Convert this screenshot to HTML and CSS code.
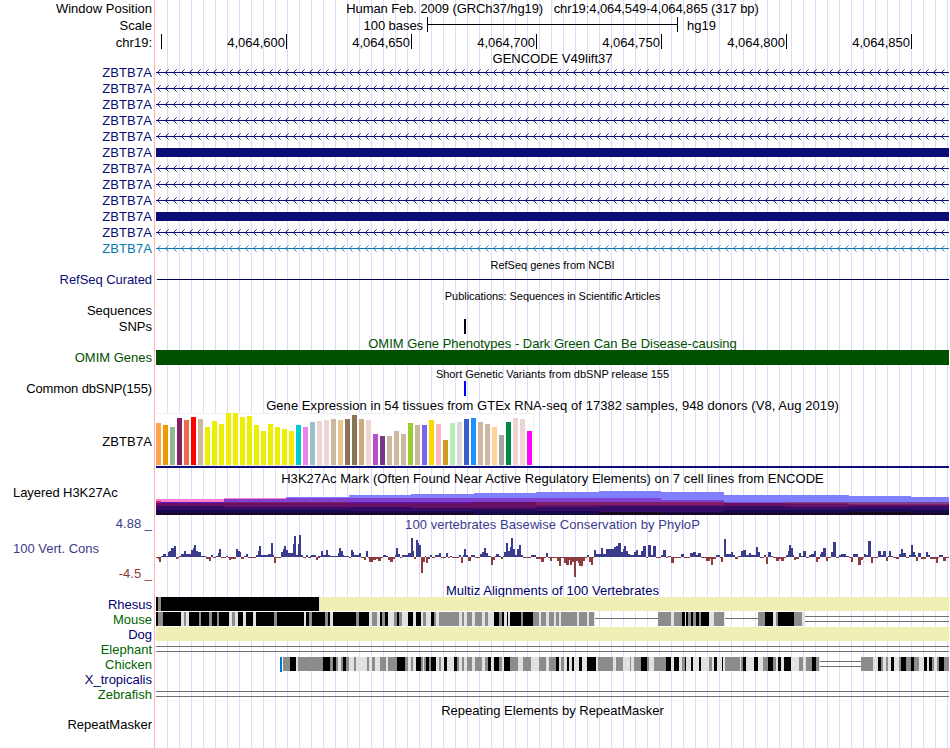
FILE: index.html
```
<!DOCTYPE html>
<html lang="en">
<head>
<meta charset="UTF-8">
<title>Human chr19:4,064,549-4,064,865 Genome Browser hg19</title>
<link rel="stylesheet" href="styles.css">
</head>
<body>
<div class="browser">
    <div class="row h17"><div class="label">Window Position</div><div class="track center"><span class="position">Human Feb. 2009 (GRCh37/hg19) &nbsp; chr19:4,064,549-4,064,865 (317 bp)</span></div></div>
    <div class="row h17"><div class="label">Scale</div><div class="track scale"><span class="bases">100 bases</span><div class="ruler"></div><span>hg19</span></div></div>
    <div class="row h16"><div class="label">chr19:</div><div class="track axis"><span></span><span>4,064,600</span><span>4,064,650</span><span>4,064,700</span><span>4,064,750</span><span>4,064,800</span><span>4,064,850</span></div></div>

    <div class="title h14 down"><span>GENCODE V49lift37</span></div>
    <div id="genes"></div>

    <div class="title small h17"><span>RefSeq genes from NCBI</span></div>
    <div class="row h14 refseq"><div class="label">RefSeq Curated</div><div class="track"><div class="line"></div></div></div>

    <div class="title small h16 pubs"><span>Publications: Sequences in Scientific Articles</span></div>
    <div class="row h16"><div class="label up">Sequences</div><div class="track"></div></div>
    <div class="row h15"><div class="label">SNPs</div><div class="track"><div class="snp"></div></div></div>

    <div class="title omim h16 down"><span>OMIM Gene Phenotypes - Dark Green Can Be Disease-causing</span></div>
    <div class="row h15 omim"><div class="label">OMIM Genes</div><div class="track fill"></div></div>

    <div class="title small h16 down"><span>Short Genetic Variants from dbSNP release 155</span></div>
    <div class="row h15"><div class="label dbsnp">Common dbSNP(155)</div><div class="track"><div class="snp blue"></div></div></div>

    <div class="title h17 down wide"><span>Gene Expression in 54 tissues from GTEx RNA-seq of 17382 samples, 948 donors (V8, Aug 2019)</span></div>
    <div class="row gtex"><div class="label down">ZBTB7A</div><div class="track"><svg id="gtex" width="378" height="53"></svg></div></div>

    <div class="title h3k wide"><span>H3K27Ac Mark (Often Found Near Active Regulatory Elements) on 7 cell lines from ENCODE</span></div>
    <div class="row layered"><div class="label left">Layered H3K27Ac</div><div class="track"><svg id="h3k27ac" width="793" height="26"></svg></div></div>

    <div class="row phylop">
        <div class="label cons"><span class="max">4.88 _</span><span class="name">100 Vert. Cons</span><span class="min">-4.5 _</span></div>
        <div class="track"><div class="title phylo wide"><span>100 vertebrates Basewise Conservation by PhyloP</span></div><svg id="wiggle" width="793" height="48"></svg></div>
    </div>

    <div class="title multiz wide"><span>Multiz Alignments of 100 Vertebrates</span></div>
    <div id="species"></div>

    <div class="title h16"><span>Repeating Elements by RepeatMasker</span></div>
    <div class="row h15"><div class="label up">RepeatMasker</div><div class="track"></div></div>
</div>
<script src="script.js"></script>
</body>
</html>
```

FILE: styles.css
```
body {
    margin: 0;
    background: white;
    color: black;
    font-family: "Liberation Sans", Arial, sans-serif;
    font-size: 13px;
}

/* base guidelines every 12px, red line between labels and tracks */
.browser {
    width: 949px;
    height: 748px;
    overflow: hidden;
    background:
        linear-gradient(#ffb4b4, #ffb4b4) 154px 0 / 1px 100% no-repeat,
        repeating-linear-gradient(to right, #dcdcfa 0, #dcdcfa 1px, transparent 1px, transparent 12px) 167px 0 / 782px 100% no-repeat;
}

.row {
    display: flex;
}

.label {
    box-sizing: border-box;
    width: 156px;
    flex: none;
    padding-right: 4px;
    display: flex;
    align-items: center;
    justify-content: flex-end;
    white-space: pre;
}

.label.left {
    justify-content: flex-start;
    padding-left: 13px;
    letter-spacing: -0.06px;
}

.label.dbsnp {
    letter-spacing: -0.12px;
}

.track {
    width: 793px;
    flex: none;
}

.center {
    display: flex;
    align-items: center;
    justify-content: center;
}

.position {
    letter-spacing: -0.09px;
}

.title {
    box-sizing: border-box;
    margin-left: 156px;
    width: 793px;
    display: flex;
    align-items: center;
    justify-content: center;
    white-space: pre;
}

.wide {
    letter-spacing: 0.06px;
}

.small {
    font-size: 11px;
}

.down {
    box-sizing: border-box;
    padding-top: 2px;
}

.up {
    padding-bottom: 2px;
}

svg {
    display: block;
    shape-rendering: crispEdges;
}

.h14 { height: 14px; }
.h15 { height: 15px; }
.h16 { height: 16px; }
.h17 { height: 17px; }

.scale {
    display: flex;
    align-items: center;
}

.bases {
    width: 267px;
    text-align: right;
    margin-right: 4px;
    letter-spacing: -0.06px;
}

.ruler {
    width: 249px;
    height: 15px;
    align-self: flex-start;
    margin-right: 9px;
    border: solid black;
    border-width: 0 1px;
    background: linear-gradient(black, black) 0 7px / 100% 1px no-repeat;
}

.axis {
    display: flex;
    overflow: hidden;
}

.axis span {
    box-sizing: border-box;
    flex: none;
    width: 125px;
    height: 15px;
    line-height: 17px;
    padding-right: 1px;
    border-right: 1px solid black;
    text-align: right;
}

.axis span:first-child {
    width: 6px;
}

.gene {
    height: 16px;
    color: #0c0c78;
}

.gene .label {
    letter-spacing: 0.1px;
}

.gene.alt {
    color: #0c78b4;
}

.gene .bar {
    height: 9px;
    margin-top: 4px;
    background: #0c0c78;
}

.refseq {
    color: #0c0c78;
}

.refseq .label {
    height: 13px;
    letter-spacing: -0.06px;
}

.refseq .line {
    height: 1px;
    margin: 6px 0 0 1px;
    background: #000050;
}

.pubs {
    padding-top: 2px;
    letter-spacing: -0.05px;
}

.snp {
    width: 2px;
    height: 15px;
    margin-left: 308px;
    background: black;
}

.snp.blue {
    background: #0000ff;
}

.omim {
    color: #005000;
}

.omim .fill {
    background: #005000;
}

.gtex {
    height: 55px;
}

.gtex .label {
    letter-spacing: 0.1px;
}

.gtex .track {
    border-bottom: 2px solid #0c0c78;
    height: 53px;
}

.h3k {
    height: 21px;
}

.layered {
    height: 26px;
}

.layered .label {
    height: 7px;
}

.phylop {
    height: 68px;
}

.cons {
    flex-direction: column;
    align-items: flex-end;
    justify-content: flex-start;
    color: #3c3c8c;
    line-height: 16px;
}

.cons .max {
    padding-top: 1px;
}

.cons .name {
    align-self: flex-start;
    margin: 9px 0 9px 13px;
}

.cons .min {
    color: #8c3c3c;
}

.phylo {
    margin-left: 0;
    height: 20px;
    padding-bottom: 2px;
    color: #3c3c8c;
}

.multiz {
    height: 14px;
    color: #000064;
}

.species {
    height: 15px;
    color: #00006e;
}

.species.green {
    color: #006400;
}
```

FILE: script.js
```
const NS = "http://www.w3.org/2000/svg";

function rect(svg, x, y, w, h, fill) {
    let r = document.createElementNS(NS, "rect");
    r.setAttribute("x", x);
    r.setAttribute("y", y);
    r.setAttribute("width", w);
    r.setAttribute("height", h);
    r.setAttribute("fill", fill);
    svg.appendChild(r);
}

function makeSvg(w, h) {
    let svg = document.createElementNS(NS, "svg");
    svg.setAttribute("width", w);
    svg.setAttribute("height", h);
    return svg;
}

function addRow(parent, className, name) {
    let row = document.createElement("div");
    row.className = "row " + className;
    row.innerHTML = '<div class="label">' + name + '</div><div class="track"></div>';
    document.getElementById(parent).appendChild(row);
    return row.lastChild;
}

// genes: introns point left, two transcripts are exonic over the whole window
for (let i = 0; i < 12; i++) {
    let track = addRow("genes", i == 11 ? "gene alt" : "gene", "ZBTB7A");
    if (i == 5 || i == 9) {
        track.innerHTML = '<div class="bar"></div>';
        continue;
    }
    let svg = makeSvg(793, 16);
    rect(svg, 0, 8, 793, 1, "currentColor");
    let d = "";
    for (let x = 1; x < 793; x += 8) {
        d += "M" + (x + 3.5) + " 5.5L" + (x + 0.5) + " 8.5L" + (x + 3.5) + " 11.5";
    }
    let path = document.createElementNS(NS, "path");
    path.setAttribute("d", d);
    path.setAttribute("fill", "none");
    path.setAttribute("stroke", "currentColor");
    path.setAttribute("shape-rendering", "geometricPrecision");
    path.setAttribute("stroke-width", "0.9");
    svg.appendChild(path);
    track.appendChild(svg);
}

// GTEx: bar height, colour
const tissues = [
    [42, "#ffa54f"], [40, "#ee9a00"], [38, "#8fbc8f"], [47, "#8b1c62"], [45, "#ee6a50"], [48, "#ff0000"], [46, "#cdb79e"],
    [38, "#eeee00"], [44, "#eeee00"], [41, "#eeee00"], [52, "#eeee00"], [52, "#eeee00"], [48, "#eeee00"], [49, "#eeee00"],
    [40, "#eeee00"], [34, "#eeee00"], [41, "#eeee00"], [38, "#eeee00"], [36, "#eeee00"], [34, "#eeee00"],
    [40, "#00cdcd"], [38, "#ee82ee"], [43, "#9ac0cd"], [44, "#eed5d2"], [45, "#eed5d2"], [46, "#cdb79e"], [45, "#eec591"],
    [46, "#8b7355"], [50, "#8b7355"], [46, "#cdaa7d"], [45, "#eed5d2"], [31, "#b452cd"], [29, "#7a378b"], [29, "#cdb79e"],
    [34, "#cdb79e"], [31, "#cdb79e"], [42, "#9acd32"], [40, "#cdb79e"], [40, "#7a67ee"], [45, "#ffd700"], [41, "#ffb6c1"],
    [25, "#cd9b1d"], [42, "#b4eeb4"], [43, "#d9d9d9"], [46, "#3a5fcd"], [47, "#1e90ff"], [43, "#cdb79e"], [41, "#cdb79e"],
    [38, "#ffd39b"], [30, "#a6a6a6"], [43, "#008b45"], [47, "#eed5d2"], [46, "#eed5d2"], [34, "#ff00ff"]
];
const gtex = document.getElementById("gtex");
rect(gtex, 0, 0, 378, 53, "#f0f0f0");
rect(gtex, 0, 1, 377, 51, "#ffffff");
tissues.forEach(([h, color], i) => rect(gtex, i * 7, 52 - h, 5, h, color));

// layered histone marks: [x, [y, colour] ...] each layer is drawn to the bottom and covered by the next
const BLUE = "#8080ff", PINK = "#ff80cc", PURPLE = "#8040d0", VIOLET = "#5a14c8", ROSE = "#802068";
const MAROON = "#681064", INDIGO = "#340c68", NAVY = "#180a50", NIGHT = "#180820";
const marks = [
    [0, [10, PINK], [13, VIOLET], [14, MAROON], [17, INDIGO], [21, NAVY], [24, NIGHT]],
    [68, [9, PINK], [10, PURPLE], [13, ROSE], [14, MAROON], [18, INDIGO], [21, NAVY], [24, NIGHT]],
    [130, [8, BLUE], [9, PURPLE], [13, ROSE], [14, MAROON], [18, INDIGO], [21, NAVY], [24, NIGHT]],
    [193, [6, BLUE], [9, PURPLE], [13, VIOLET], [14, MAROON], [18, INDIGO], [22, NAVY], [24, NIGHT]],
    [255, [5, BLUE], [9, PURPLE], [13, VIOLET], [14, MAROON], [19, INDIGO], [22, NAVY], [24, NIGHT]],
    [318, [4, BLUE], [9, PURPLE], [13, MAROON], [19, INDIGO], [21, NAVY], [25, NIGHT]],
    [380, [3, BLUE], [9, PURPLE], [13, ROSE], [16, MAROON], [18, INDIGO], [22, NAVY], [25, NIGHT]],
    [443, [2, BLUE], [9, PURPLE], [13, ROSE], [16, MAROON], [17, INDIGO], [23, NIGHT]],
    [505, [3, BLUE], [11, PURPLE], [13, ROSE], [16, MAROON], [17, INDIGO], [23, NAVY], [24, NIGHT]],
    [568, [6, BLUE], [13, PURPLE], [14, MAROON], [17, INDIGO], [21, NAVY], [24, NIGHT]],
    [630, [6, BLUE], [13, "#804090"], [14, ROSE], [15, MAROON], [18, INDIGO], [21, NAVY], [24, NIGHT]],
    [693, [7, BLUE], [13, "#804090"], [15, ROSE], [16, MAROON], [17, INDIGO], [20, NAVY], [23, NIGHT]],
    [755, [8, BLUE], [13, "#804090"], [15, ROSE], [16, MAROON], [17, INDIGO], [21, NAVY], [24, NIGHT]]
];
const h3k = document.getElementById("h3k27ac");
marks.forEach(([x, ...layers], i) => {
    let end = i + 1 < marks.length ? marks[i + 1][0] : 793;
    layers.forEach(([y, color]) => rect(h3k, x, y, end - x, 26 - y, color));
});
rect(h3k, 0, 12, 5, 2, "#d01880");

// conservation scores: [track offset, "x:height ..."] with x in thirds of a pixel
const scores = [
    [-156, "468:-1 474:-2 477:-5 483:1 490:3 498:1 504:5 508:6 513:9 522:11 528:-2 534:-1 538:1 543:3 552:6 558:3 573:7 579:9 582:12 588:6 594:5 603:1 617:-2 626:-4 633:2 640:-1 648:1 654:4 657:8 663:-1 678:1 684:-1 687:-3 693:-2 708:8 714:6 720:5 723:-2 732:1 738:3 744:-1 768:2 774:6 777:11 783:2 805:3 813:14 819:2 822:-6 828:-1 843:5 849:8 852:11 858:7 864:4 879:13 882:21 888:2 894:13 897:22 903:2 909:-1 918:2 924:-1 933:2 948:-3 954:-1 960:0"],
    [154, "0:1 18:-3 24:1 33:6 39:2 48:7 54:2 60:1 84:4 87:9 93:6 99:2 102:1 117:-1 123:7 129:5 132:2 147:4 153:-1 162:-3 168:6 174:-1 177:-5 189:-3 198:-2 204:-4 213:-1 219:2 228:1 234:-3 240:-5 249:-2 255:2 258:9 264:3 270:-1 276:2 294:4 303:19 309:6 312:-2 318:17 324:14 327:12 333:-16 339:-5 345:1 348:-6 354:-2 360:2 366:-1 375:2 387:4 393:-1 408:4 414:-1 420:1 426:-1 447:2 453:-6 459:2 462:8 468:2 474:-4 483:2 495:-1 510:3 516:5 522:9 528:4 534:1 543:-8 549:-3 555:1 558:3 567:1 573:-2 579:1 582:5 588:14 594:6 600:10 603:19 609:8 615:2 621:8 627:12 633:2 639:-1 663:2 678:-2 693:-5 702:-1 708:4 714:-1 720:-4 726:-1 741:-4 747:-9 753:-1 762:-6 768:-8 777:-3 780:-8 786:-5 792:-20 798:-4 804:-6 807:-9 819:-4 825:-1 831:2 837:-5 843:-8 849:-1 852:7 858:3 873:9 879:3 888:8 912:10 918:11 924:14 933:5 939:8 942:11 948:6 954:3 960:0"],
    [474, "0:2 12:5 18:7 24:2 33:6 39:11 48:-1 54:12 63:2 69:11 78:-1 93:2 99:7 108:-1 114:1 123:-6 132:-1 153:3 162:-1 180:4 189:5 198:2 204:4 213:-1 228:-4 240:-2 243:-8 249:-2 258:2 270:-1 273:-5 279:0 282:18 288:3 303:5 309:2 315:-2 324:1 333:6 339:7 348:2 357:4 363:2 378:10 384:5 390:-1 402:2 408:-7 414:5 423:1 430:-1 438:-4 447:-2 453:-4 462:-1 468:2 474:6 477:12 483:9 489:2 492:-3 498:-2 507:4 513:1 519:6 528:-1 537:2 543:3 552:6 558:-5 564:-2 570:3 573:5 579:9 588:-4 594:-1 603:5 609:15 618:-1 627:2 633:3 648:1 657:-1 663:-5 669:3 684:-8 693:-3 699:-1 702:3 708:2 714:16 723:-6 729:-1 744:6 753:2 759:6 768:-4 774:1 777:6 783:1 790:-1 798:-2 807:3 813:8 819:4 828:-1 837:2 843:12 849:5 855:2 858:-4 864:4 873:-2 888:5 894:2 900:-2 918:-6 924:-1 927:2 939:-4 948:-1 957:0"]
];
const wiggle = document.getElementById("wiggle");
scores.forEach(([offset, text]) => {
    let steps = text.split(" ").map(s => s.split(":").map(Number));
    for (let i = 0; i + 1 < steps.length; i++) {
        let [x, h] = steps[i];
        let w = (steps[i + 1][0] - x) / 3;
        let left = x / 3 + offset;
        if (h > 0) rect(wiggle, left, 22 - h, w, h, "#3c3c8c");
        if (h < 0) rect(wiggle, left, 22, w, -h, "#8c3c3c");
    }
});

// alignment shades: b black, g gray, l light, y insert, - gap, = double gap
const shades = { b: "#000000", g: "#8c8c8c", l: "#e1e1e1", y: "#f0f0b4" };
const species = [
    ["Rhesus", "", [[0, "0b 6g 15b 489l 492y 2379"]]],
    ["Mouse", "green", [
        [-156, "468b 474g 489b 543l 552g 558l 567b 597g 603b 627g 636b 651g 657b 687l 696g 705l 714b 729l 738b 759l 768b 822g 831b 912l 918b 927g 936b 960"],
        [154, "0g 6b 45g 54b 60l 69b 138g 147b 177l 186g 201l 210b 216g 224b 234l 252g 261b 267g 276l 294b 309l 318b 333l 339g 348l 363b 372g 378l 387g 447l 456g 462l 471g 486l 495g 516l 525g 534l 552b 567g 576b 582l 591b 594l 600b 633g 639b 669g 687l 693g 708l 717g 732l 738g 747l 753g 801l 807g 831l 837g 852l 855- 960"],
        [474, "0- 84g 123l 132g 156b 165l 168b 174g 183b 189g 198b 207g 213b 237l 252g 282l 285- 384g 405b 429l 438g 444b 492g 516l 525= 957"]]],
    ["Dog", "", [[0, "0y 2379"]]],
    ["Elephant", "green", [[0, "0= 2379"]]],
    ["Chicken", "green", [
        [-156, "849g 870b 888l 894g 960"],
        [154, "0g 39b 60g 69b 78g 84l 93g 99b 108g 117l 132g 138l 171g 177l 186g 195l 210g 228l 234g 261b 285g 294l 303g 309l 318b 333g 339l 342g 348b 357g 363b 378l 387g 393l 402b 411l 432b 441g 447l 456g 462l 471g 486l 495g 516l 525g 534b 543l 552b 567g 576l 582b 600g 624l 639g 663l 687g 708l 717g 738b 747l 753g 762l 771b 777l 786b 792l 807b 816l 831b 858l 864g 909l 918g 939l 960"],
        [474, "0g 3l 12g 33b 51g 57l 72g 108b 123l 132b 147l 156g 165b 168l 183b 189l 207b 213l 237g 246l 252b 261l 276b 279l 285g 330l 333g 339b 348l 372b 384l 399g 414b 429g 438l 444b 453l 462b 483l 507g 519l 528g 546b 558g 567l 570= 693g 729l 744b 753g 759l 768g 774l 783b 792l 807g 813b 828g 843b 852g 867l 882b 891l 897b 906g 912l 921g 927b 942g 957"]]],
    ["X_tropicalis", "", []],
    ["Zebrafish", "green", [[0, "0= 2379"]]]
];
species.forEach(([name, cls, chunks]) => {
    let track = addRow("species", "species " + cls, name);
    let svg = makeSvg(793, 15);
    chunks.forEach(([offset, text]) => {
        let parts = text.split(" ");
        for (let i = 0; i + 1 < parts.length; i++) {
            let x = parseInt(parts[i]);
            let kind = parts[i].slice(-1);
            let w = (parseInt(parts[i + 1]) - x) / 3;
            let left = x / 3 + offset;
            if (kind == "-") {
                rect(svg, left, 6, w, 1, "#707070");
            } else if (kind == "=") {
                rect(svg, left, 4, w, 1, "#707070");
                rect(svg, left, 9, w, 1, "#707070");
            } else {
                rect(svg, left, 0, w, 14, shades[kind]);
            }
        }
    });
    if (name == "Chicken") rect(svg, 124, 0, 2, 15, "#0078c8");
    track.appendChild(svg);
});
```
